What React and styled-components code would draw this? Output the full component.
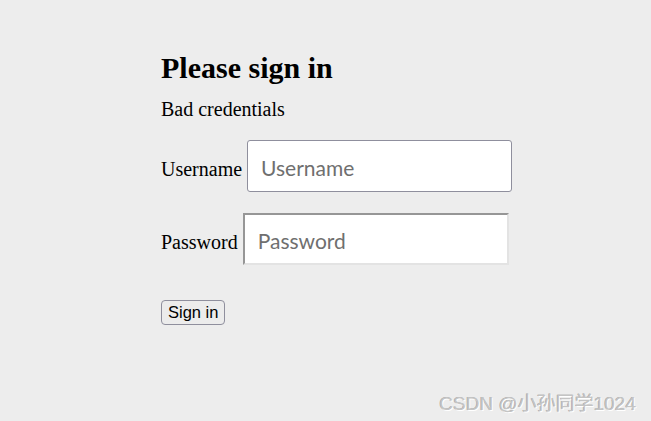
import React from "react";
import styled, { createGlobalStyle } from "styled-components";

const Global = createGlobalStyle`
  html, body { margin: 0; padding: 0; background: #ededed; }
  body { font-family: "Liberation Serif", "Times New Roman", serif; color: #000; }
`;

const Page = styled.div`
  position: relative;
  width: 651px;
  height: 421px;
  box-sizing: border-box;
  padding: 51px 0 0 161px;
  background: #ededed;
  overflow: hidden;
`;

const Form = styled.form`
  display: flex;
  flex-direction: column;
  align-items: flex-start;
  margin: 0;
`;

const Heading = styled.h2`
  margin: 0;
  font-size: 30px;
  line-height: 34px;
  font-weight: bold;
`;

const Alert = styled.p`
  margin: 13px 0 0;
  font-size: 20px;
  line-height: 23px;
`;

const Row = styled.p`
  display: flex;
  align-items: baseline;
  gap: 5px;
  margin: ${(p) => p.$top}px 0 0;
`;

const Label = styled.label`
  font-size: 20px;
  line-height: 23px;
`;

const Input = styled.input`
  box-sizing: border-box;
  width: ${(p) => p.$width}px;
  height: 52px;
  margin: 0;
  padding: 2px 13px 0;
  font-family: Lato, "Noto Sans", sans-serif;
  font-size: 21px;
  background: #fff;
  outline: none;
  border-radius: ${(p) => (p.$inset ? "0" : "3px")};
  border: ${(p) => (p.$inset ? "2px solid" : "1px solid #8f8f9d")};
  ${(p) => p.$inset && `border-color: #969696 #e3e3e3 #e3e3e3 #969696;`}
  &::placeholder { color: #6f6f6f; opacity: 1; }
`;

const Button = styled.button`
  margin-top: 35px;
  box-sizing: border-box;
  height: 25px;
  padding: 0 6px;
  font-family: "Liberation Sans", Arial, sans-serif;
  font-size: 16.5px;
  line-height: 21px;
  color: #000;
  background: #ececec;
  border: 1px solid #8f8f9d;
  border-radius: 4px;
`;

const Watermark = styled.div`
  position: absolute;
  right: 15px;
  bottom: 6px;
  font-family: "Liberation Sans", Arial, "Noto Sans CJK SC", sans-serif;
  font-size: 19px;
  color: #c4c4c4;
  text-shadow: 1px 1px 0 #fff, -0.5px -0.5px 0 #a0a0a0;
`;

export default function App() {
  return (
    <>
      <Global />
      <Page>
        <Form onSubmit={(e) => e.preventDefault()}>
          <Heading>Please sign in</Heading>
          <Alert>Bad credentials</Alert>
          <Row $top={19}>
            <Label htmlFor="username">Username</Label>
            <Input id="username" $width={265} placeholder="Username" />
          </Row>
          <Row $top={21}>
            <Label htmlFor="password">Password</Label>
            <Input id="password" type="password" $width={266} $inset placeholder="Password" />
          </Row>
          <Button type="submit">Sign in</Button>
        </Form>
        <Watermark>CSDN @小孙同学1024</Watermark>
      </Page>
    </>
  );
}
